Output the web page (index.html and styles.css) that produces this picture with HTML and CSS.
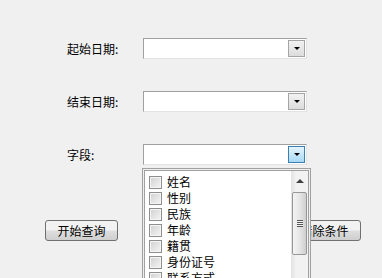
FILE: index.html
```html
<!DOCTYPE html>
<html lang="zh-CN">
  <head>
    <meta charset="utf-8">
    <title>查询</title>
    <link rel="stylesheet" href="styles.css">
  </head>
  <body>
    <div class="form">
      <div class="row">
        <span class="label">起始日期:</span>
        <div class="combo">
          <span class="combo-btn"><span class="arrow"></span></span>
        </div>
      </div>
      <div class="row">
        <span class="label">结束日期:</span>
        <div class="combo">
          <span class="combo-btn"><span class="arrow"></span></span>
        </div>
      </div>
      <div class="row">
        <span class="label">字段:</span>
        <div class="combo">
          <span class="combo-btn active"><span class="arrow"></span></span>
        </div>
      </div>
      <div class="buttons">
        <button type="button">开始查询</button>
        <button type="button">清除条件</button>
      </div>
    </div>

    <!-- dropdown list of the 字段 combo -->
    <div class="popup">
      <div class="popup-inner">
        <ul class="fields">
          <li><span class="check"></span>姓名</li>
          <li><span class="check"></span>性别</li>
          <li><span class="check"></span>民族</li>
          <li><span class="check"></span>年龄</li>
          <li><span class="check"></span>籍贯</li>
          <li><span class="check"></span>身份证号</li>
          <li><span class="check"></span>联系方式</li>
        </ul>
        <div class="scrollbar">
          <span class="up"></span>
          <span class="thumb"><span class="grip"></span></span>
        </div>
      </div>
    </div>
  </body>
</html>
```

FILE: styles.css
```css
body {
  margin: 0;
  background: #f0f0f0;
  font-family: "Noto Sans CJK SC", "DejaVu Sans", sans-serif;
  font-size: 12px;
  color: #000;
  overflow: hidden;
  height: 278px;
  position: relative;
}

.form {
  padding-top: 38px;
  display: flex;
  flex-direction: column;
  gap: 32px;
}

.row {
  display: flex;
  align-items: center;
  height: 21px;
  padding-left: 67px;
}

.label {
  width: 76px;
  line-height: 21px;
}

.combo {
  width: 161px;
  height: 19px;
  background: #fff;
  border: 1px solid;
  border-color: #a0a0a0 #e3e3e3 #e3e3e3 #a0a0a0;
  display: flex;
  justify-content: flex-end;
  align-items: center;
  padding-right: 1px;
}

.combo-btn {
  width: 15px;
  height: 15px;
  border: 1px solid #a5a5a5;
  background: linear-gradient(#f2f2f2, #dcdcdc);
  display: flex;
  align-items: center;
  justify-content: center;
}

.combo-btn.active {
  border-color: #3c7fb1;
  background: linear-gradient(#e5f4fc, #a7d9f5);
}

.arrow {
  width: 0;
  height: 0;
  border-left: 3px solid transparent;
  border-right: 3px solid transparent;
  border-top: 3px solid #000;
}

.buttons {
  display: flex;
  justify-content: space-between;
  padding: 0 21px 0 45px;
  margin-top: 23px;
}

.buttons button {
  width: 73px;
  height: 21px;
  padding: 0;
  border: 1px solid #707070;
  border-radius: 3px;
  background: linear-gradient(#f2f2f2 45%, #dddddd 55%, #cfcfcf);
  font-family: "Noto Sans CJK SC", "DejaVu Sans", sans-serif;
  font-size: 12px;
  color: #000;
}

.popup {
  position: absolute;
  left: 142px;
  top: 168px;
  width: 165px;
  height: 140px;
  border: 1px solid #a0a0a0;
  padding: 1px;
  background: #f0f0f0;
}

.popup-inner {
  height: 100%;
  border: 1px solid #a0a0a0;
  background: #fff;
  display: flex;
}

.fields {
  list-style: none;
  margin: 0;
  padding: 3px 0 0 4px;
  flex: 1;
}

.fields li {
  height: 16px;
  line-height: 16px;
  display: flex;
  align-items: center;
  gap: 5px;
}

.check {
  width: 11px;
  height: 11px;
  border: 1px solid #8e8f8f;
  box-shadow: inset 0 0 0 1px #f4f4f4;
  background: linear-gradient(135deg, #d0d0d0, #f6f6f6);
}

.scrollbar {
  width: 17px;
  background: linear-gradient(90deg, #e2e2e2, #f2f2f2 30%, #f2f2f2);
  display: flex;
  flex-direction: column;
  align-items: center;
}

.up {
  margin-top: 8px;
  width: 0;
  height: 0;
  border-left: 4px solid transparent;
  border-right: 4px solid transparent;
  border-bottom: 4px solid #404040;
}

.thumb {
  margin-top: 9px;
  width: 13px;
  height: 61px;
  border: 1px solid #979797;
  border-radius: 2px;
  background: linear-gradient(90deg, #f4f4f4, #e6e6e6 50%, #cfcfcf);
  display: flex;
  align-items: center;
  justify-content: center;
}

.grip {
  width: 6px;
  height: 7px;
  background: repeating-linear-gradient(#555 0 1px, #f4f4f4 1px 2px);
}
```
